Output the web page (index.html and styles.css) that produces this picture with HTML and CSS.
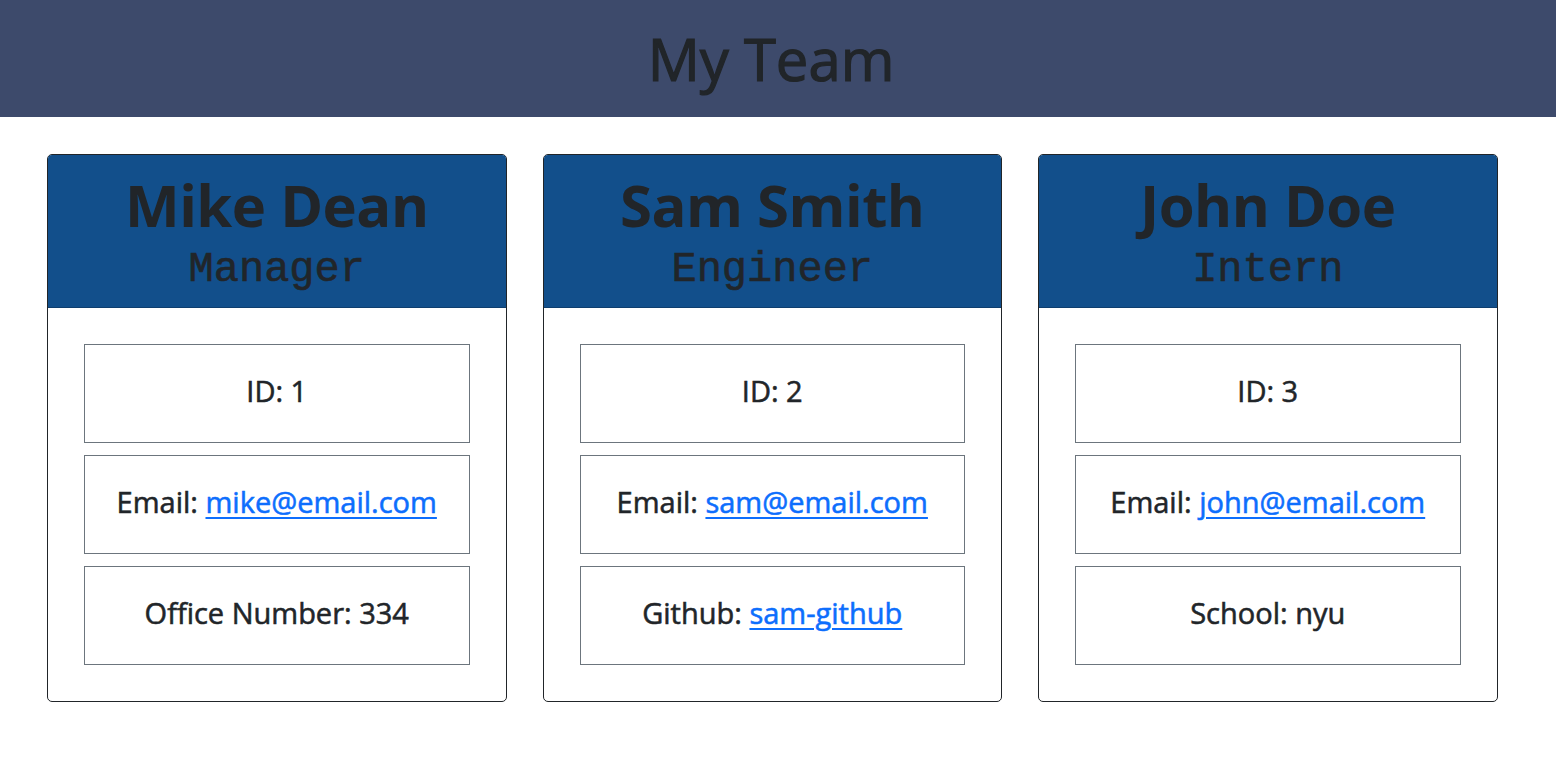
FILE: index.html
```html
<!DOCTYPE html>
<html lang="en">
<head>
<meta charset="utf-8">
<title>My Team</title>
<link rel="stylesheet" href="styles.css">
</head>
<body>
<header class="banner">
  <h1 class="banner-title">My Team</h1>
</header>
<main class="team">
  <section class="card">
    <div class="card-head">
      <h2 class="name">Mike Dean</h2>
      <h3 class="role">Manager</h3>
    </div>
    <ul class="facts">
      <li class="fact">ID: 1</li>
      <li class="fact">Email:&nbsp;<a href="#">mike@email.com</a></li>
      <li class="fact">Office Number: 334</li>
    </ul>
  </section>
  <section class="card">
    <div class="card-head">
      <h2 class="name">Sam Smith</h2>
      <h3 class="role">Engineer</h3>
    </div>
    <ul class="facts">
      <li class="fact">ID: 2</li>
      <li class="fact">Email:&nbsp;<a href="#">sam@email.com</a></li>
      <li class="fact">Github:&nbsp;<a href="#">sam-github</a></li>
    </ul>
  </section>
  <section class="card">
    <div class="card-head">
      <h2 class="name">John Doe</h2>
      <h3 class="role">Intern</h3>
    </div>
    <ul class="facts">
      <li class="fact">ID: 3</li>
      <li class="fact">Email:&nbsp;<a href="#">john@email.com</a></li>
      <li class="fact">School: nyu</li>
    </ul>
  </section>
</main>
</body>
</html>
```
FILE: styles.css
```css
* { box-sizing: border-box; }
body {
  margin: 0;
  font-family: "Open Sans", "Noto Sans", sans-serif;
  color: #212529;
  background: #fff;
}
.banner {
  background: #3d4a6b;
  height: 117px;
  display: flex;
  align-items: center;
  justify-content: center;
}
.banner-title {
  margin: 0;
  font-size: 58px;
  font-weight: 400;
  line-height: 1;
  color: #212529;
  position: relative;
  left: -7px;
  -webkit-text-stroke: 1.2px #212529;
}
.team {
  display: flex;
  justify-content: flex-start;
  gap: 36px;
  padding: 37px 0 0 47px;
}
.card {
  width: 459.5px;
  border: 1px solid #212529;
  border-radius: 5px;
  overflow: hidden;
}
.card-head {
  background: #124f8b;
  height: 153px;
  text-align: center;
  padding-top: 16px;
  border-bottom: 1px solid #0e3e6e;
}
.name {
  margin: 0;
  font-size: 58px;
  font-weight: 700;
  line-height: 68px;
  letter-spacing: -0.5px;
}
.role {
  margin: 0;
  font-family: "Liberation Mono", "Courier New", monospace;
  font-size: 42px;
  font-weight: 400;
  line-height: 62px;
  -webkit-text-stroke: 0.6px #212529;
}
.facts {
  list-style: none;
  margin: 0;
  padding: 36px;
  display: flex;
  flex-direction: column;
  gap: 12px;
}
.fact {
  height: 99px;
  border: 1px solid #6c757d;
  display: flex;
  align-items: center;
  justify-content: center;
  font-size: 29px;
  font-weight: 400;
  padding-bottom: 6px;
  -webkit-text-stroke: 0.55px currentColor;
}
.fact a {
  color: #0d6efd;
  text-decoration: underline;
  text-decoration-thickness: 2px;
  text-underline-offset: 4px;
}
```
